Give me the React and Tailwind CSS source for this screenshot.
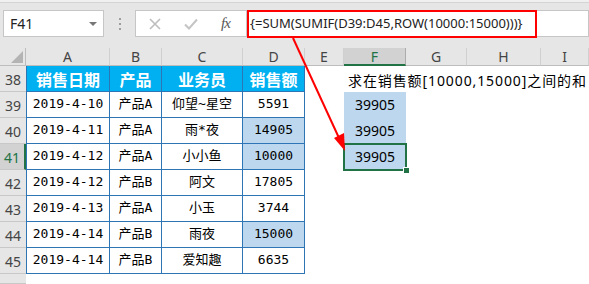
import React from 'react';

const W = ['w-[84px]', 'w-[52px]', 'w-[81px]', 'w-[62px]', 'w-[39px]', 'w-[62px]', 'w-[61px]', 'w-[74px]', 'w-[48px]'];
const LETTERS = ['A', 'B', 'C', 'D', 'E', 'F', 'G', 'H', 'I'];

const ROWS = [
  { n: 39, d: ['2019-4-10', '产品A', '仰望~星空', '5591'], f: '39905' },
  { n: 40, d: ['2019-4-11', '产品A', '雨*夜', '14905'], hl: true, f: '39905' },
  { n: 41, d: ['2019-4-12', '产品A', '小小鱼', '10000'], hl: true, f: '39905', sel: true },
  { n: 42, d: ['2019-4-12', '产品B', '阿文', '17805'] },
  { n: 43, d: ['2019-4-13', '产品A', '小玉', '3744'] },
  { n: 44, d: ['2019-4-14', '产品B', '雨夜', '15000'], hl: true },
  { n: 45, d: ['2019-4-14', '产品B', '爱知趣', '6635'] },
];

const num = "font-['Noto_Sans','Liberation_Sans',sans-serif]";
const cellFont = "font-['DejaVu_Sans_Mono','Noto_Sans_CJK_SC',monospace] text-[13px] text-black";

const RowHead = ({ n, sel, h = 'h-[26px]' }) => (
  <div
    className={`w-[26px] ${h} shrink-0 flex items-end justify-center pb-[1px] border-b border-[#c8c8c8] text-[14px] ${num} ${
      sel ? 'bg-[#d2d2d2] text-[#217346] border-r-2 border-r-[#217346]' : 'bg-[#e6e6e6] text-[#444]'
    }`}
  >
    {n}
  </div>
);

const Toolbar = () => (
  <div className="relative bg-[#e6e6e6]">
    <div className="h-[3px] bg-[#f0f0f0] border-b border-[#d4d4d4]" />
    <div className="flex items-start pt-[7px] h-[45px]">
      {/* name box */}
      <div className="ml-[3px] w-[101px] h-[27px] bg-white border border-[#c6c6c6] flex items-center justify-between pl-[6px] pr-[6px]">
        <span className={`text-[14px] text-[#222] ${num}`}>F41</span>
        <span className="w-0 h-0 border-l-[4px] border-r-[4px] border-t-[4px] border-l-transparent border-r-transparent border-t-[#777]" />
      </div>
      <div className="w-[31px] h-[27px] flex flex-col items-center justify-center gap-[3px]">
        <span className="w-[2px] h-[2px] bg-[#9e9e9e]" />
        <span className="w-[2px] h-[2px] bg-[#9e9e9e]" />
        <span className="w-[2px] h-[2px] bg-[#9e9e9e]" />
      </div>
      {/* cancel / enter / fx */}
      <div className="w-[112px] h-[27px] bg-white border border-[#c6c6c6] flex items-center">
        <svg width="14" height="14" viewBox="0 0 14 14" className="ml-[12px]">
          <path d="M2 2 L12 12 M12 2 L2 12" stroke="#bdbdbd" strokeWidth="1.6" fill="none" />
        </svg>
        <svg width="16" height="14" viewBox="0 0 16 14" className="ml-[21px]">
          <path d="M2 7.5 L6 11.5 L14 2.5" stroke="#c4c4c4" strokeWidth="2" fill="none" />
        </svg>
        <span className="ml-[22px] text-[15px] italic text-[#555] font-['Liberation_Serif',serif] tracking-[-1px]">fx</span>
      </div>
      {/* formula */}
      <div className="flex-1 h-[27px] bg-white border border-l-0 border-[#c6c6c6] flex items-center pl-[3px]">
        <span className={`text-[13px] text-[#222] whitespace-nowrap ${num}`}>{'{=SUM(SUMIF(D39:D45,ROW(10000:15000)))}'}</span>
      </div>
    </div>
    <div className="absolute left-[247px] top-[10px] w-[290px] h-[28px] border-2 border-[#ff0000]" />
  </div>
);

const ColHeads = () => (
  <div className="flex h-[18px] bg-[#e6e6e6]">
    <div className="relative w-[26px] shrink-0 border-r border-b border-[#bdbdbd]">
      <svg width="12" height="12" viewBox="0 0 12 12" className="absolute right-[2px] bottom-[2px]">
        <polygon points="12,0 12,12 0,12" fill="#b4b4b4" />
      </svg>
    </div>
    {LETTERS.map((l, i) => (
      <div
        key={l}
        className={`${W[i]} shrink-0 flex items-center justify-center text-[14px] ${num} border-r ${
          l === 'F'
            ? 'bg-[#d2d2d2] text-[#217346] border-b-2 border-b-[#217346] border-r-[#ababab]'
            : 'text-[#444] border-b border-b-[#bdbdbd] border-r-[#d0d0d0]'
        }`}
      >
        {l}
      </div>
    ))}
  </div>
);

export default function App() {
  const bd = 'border-[#2e75b6]';
  return (
    <div className="relative w-[589px] h-[284px] overflow-hidden bg-white">
      <Toolbar />
      <ColHeads />

      {/* header row 38 */}
      <div className="flex h-[26px]">
        <RowHead n={38} />
        {['销售日期', '产品', '业务员', '销售额'].map((t, i) => (
          <div
            key={t}
            className={`${W[i]} shrink-0 flex items-center justify-center bg-[#00b0f0] text-white font-bold text-[16px] font-['Noto_Sans_CJK_SC',sans-serif] border-r border-b ${bd} ${i === 0 ? 'border-l' : ''}`}
          >
            {t}
          </div>
        ))}
        <div className={`${W[4]} shrink-0`} />
        <div className={`${W[5]} shrink-0 flex items-end pb-[1px] pl-[4px] overflow-visible`}>
          <span className="whitespace-nowrap text-[14px] tracking-[0.9px] text-black font-['Noto_Sans','Noto_Sans_CJK_SC',sans-serif]">
            求在销售额[10000,15000]之间的和
          </span>
        </div>
      </div>

      {ROWS.map((r) => (
        <div key={r.n} className="flex h-[26px]">
          <RowHead n={r.n} sel={r.sel} />
          {r.d.map((t, i) => (
            <div
              key={i}
              className={`${W[i]} shrink-0 flex items-end justify-center pb-[4px] ${cellFont} border-r border-b ${bd} ${
                i === 0 ? 'border-l' : ''
              } ${i === 3 && r.hl ? 'bg-[#bdd7ee]' : 'bg-white'}`}
            >
              {t}
            </div>
          ))}
          <div className={`${W[4]} shrink-0`} />
          <div
            className={`relative ${W[5]} shrink-0 flex items-end justify-center pb-[3px] text-[14px] text-black ${num} ${
              r.f ? 'bg-[#bdd7ee]' : ''
            }`}
          >
            {r.f}
            {r.sel && (
              <>
                <div className="absolute -left-[1px] -top-[1px] -right-[1px] -bottom-[1px] border-2 border-[#217346]" />
                <div className="absolute -right-[4px] -bottom-[4px] w-[7px] h-[7px] bg-[#217346] border border-white" />
              </>
            )}
          </div>
        </div>
      ))}

      {/* row 46 */}
      <div className="flex h-[10px]">
        <RowHead n="" h="h-[10px]" />
      </div>

      {/* red arrow */}
      <svg className="absolute left-0 top-0 pointer-events-none" width="589" height="284">
        <line x1="293" y1="38" x2="339" y2="138" stroke="#ff0000" strokeWidth="2" />
        <polygon points="345,151 334,138 344,133" fill="#ff0000" />
      </svg>
    </div>
  );
}
